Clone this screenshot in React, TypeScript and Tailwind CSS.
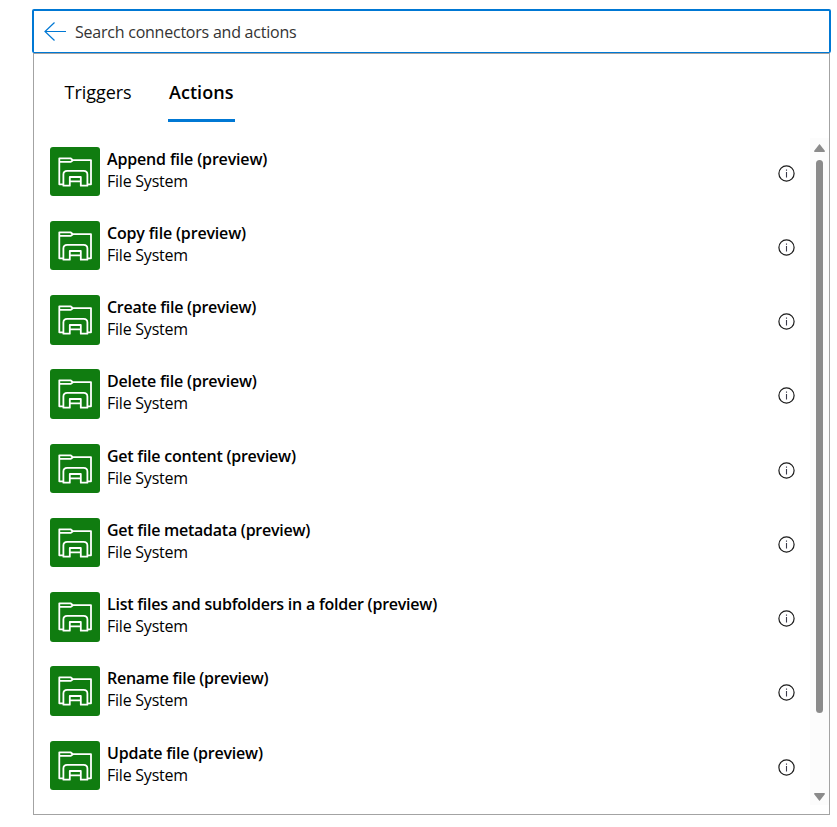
const ITEMS: { title: string; tracking: string }[] = [
  { title: "Append file (preview)", tracking: "tracking-[-0.16px]" },
  { title: "Copy file (preview)", tracking: "tracking-[-0.17px]" },
  { title: "Create file (preview)", tracking: "tracking-[-0.28px]" },
  { title: "Delete file (preview)", tracking: "tracking-[-0.2px]" },
  { title: "Get file content (preview)", tracking: "tracking-[-0.24px]" },
  { title: "Get file metadata (preview)", tracking: "tracking-[-0.26px]" },
  { title: "List files and subfolders in a folder (preview)", tracking: "tracking-[-0.23px]" },
  { title: "Rename file (preview)", tracking: "tracking-[-0.28px]" },
  { title: "Update file (preview)", tracking: "tracking-[-0.22px]" },
];

function FolderIcon() {
  return (
    <svg width="50" height="49" viewBox="0 0 50 49" fill="none" stroke="#fff" strokeWidth="1.8" strokeLinejoin="round">
      <path d="M13.5 37.3H9.3V11.3H20.5L23 13.2H41V37.3H37.5" />
      <path d="M9.3 14.9H20.5L23 13.2" />
      <path d="M13.4 38.7V27.5Q13.4 23.8 17.2 23.8H33.6Q37.4 23.8 37.4 27.5V38.7H30.8V30H19.8V38.7Z" />
      <path d="M19.8 34.3H30.8" />
    </svg>
  );
}

function InfoIcon() {
  return (
    <svg width="17" height="17" viewBox="0 0 17 17" fill="none" stroke="#1b1b1b">
      <circle cx="8.5" cy="8.5" r="7.6" strokeWidth="1.2" />
      <path d="M8.5 7V12.5M8.5 4.6V5.8" stroke="#3b3b4b" strokeWidth="1.1" />
    </svg>
  );
}

export default function App() {
  return (
    <div className="h-[827px] w-[837px] overflow-hidden bg-white pt-[9px] pl-8 font-['Open_Sans','Noto_Sans',sans-serif] text-black">
      <div className="flex h-11 w-[799px] items-center rounded-[2px] border-2 border-b border-[#0078d4] pl-[10px]">
        <svg width="22" height="20" viewBox="0 0 22 20" fill="none" stroke="#0078d4" strokeWidth="1.2">
          <path d="M22 9.5H1M10.5 0.5L1 9.5L10.5 18.5" />
        </svg>
        <span className="ml-[9px] text-base leading-6 tracking-[-0.23px] text-[#333]">Search connectors and actions</span>
      </div>
      <div className="ml-px flex h-[762px] w-[797px] flex-col border border-[#a3a3a3]">
        <div className="flex h-[68px] shrink-0 items-start pl-[30px] text-lg">
          <div className="flex h-[68px] w-[69px] items-center pt-[7px]">
            <span className="ml-[0.6px] tracking-[-0.05px]">Triggers</span>
          </div>
          <div className="ml-[35px] flex h-[68px] w-[67px] items-center border-b-3 border-[#0078d4] pt-[10px] font-semibold">
            <span className="ml-px tracking-[0.05px]">Actions</span>
          </div>
        </div>
        <div className="mt-4 flex h-[667px]">
          <ul className="w-[776px] pt-[8.6px] pl-4">
            {ITEMS.map((item) => (
              <li key={item.title} className="flex h-[74.25px] items-start">
                <div className="h-[49.5px] w-[50px] shrink-0 overflow-hidden rounded-[3px] bg-[#107c10]">
                  <FolderIcon />
                </div>
                <div className="ml-[7px] flex-1 whitespace-nowrap text-base leading-[22px]">
                  <div className={"mt-px font-semibold " + item.tracking}>{item.title}</div>
                  <div className="tracking-[-0.23px]">File System</div>
                </div>
                <div className="mt-[18px] mr-[15px]">
                  <InfoIcon />
                </div>
              </li>
            ))}
          </ul>
          <div className="flex w-[19px] flex-col items-center bg-[#fcfcfc] pt-[6px] pb-1">
            <svg width="11" height="8" viewBox="0 0 11 8" fill="#8b8b8b">
              <path d="M5.5 0L11 7Q11 8 10 8H1Q0 8 0 7Z" />
            </svg>
            <div className="mt-2 h-[553px] w-[7px] rounded-full bg-[#8b8b8b]" />
            <svg className="mt-auto" width="11" height="8" viewBox="0 0 11 8" fill="#8b8b8b">
              <path d="M5.5 8L11 1Q11 0 10 0H1Q0 0 0 1Z" />
            </svg>
          </div>
        </div>
      </div>
    </div>
  );
}
